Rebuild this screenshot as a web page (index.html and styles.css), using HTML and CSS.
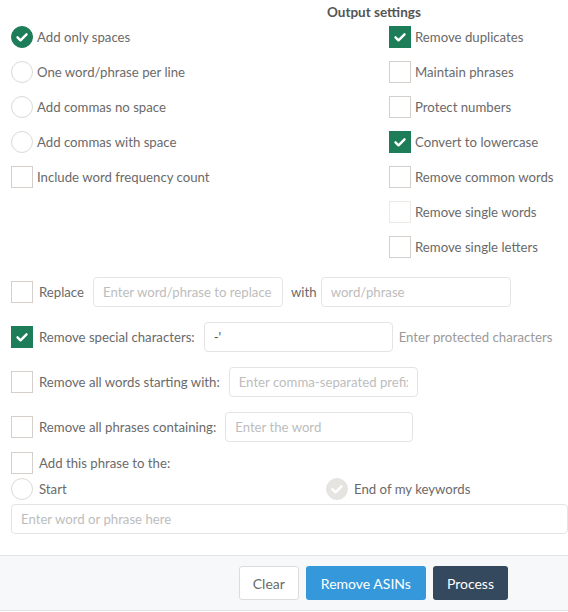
FILE: index.html
```html
<!DOCTYPE html>
<html>
<head>
<meta charset="utf-8">
<link rel="stylesheet" href="styles.css">
</head>
<body>
<div class="page">
  <div class="top">
    <div class="col-left">
      <div class="opt"><span class="radio on"><svg viewBox="0 0 22 22"><path d="M6.5 11.3l3 3 6-6" /></svg></span><span>Add only spaces</span></div>
      <div class="opt"><span class="radio"></span><span>One word/phrase per line</span></div>
      <div class="opt"><span class="radio"></span><span>Add commas no space</span></div>
      <div class="opt"><span class="radio"></span><span>Add commas with space</span></div>
      <div class="opt"><span class="box"></span><span>Include word frequency count</span></div>
    </div>
    <div class="col-right">
      <div class="heading">Output settings</div>
      <div class="list">
        <div class="opt"><span class="box on"><svg viewBox="0 0 22 22"><path d="M6.5 11.3l3 3 6-6" /></svg></span><span>Remove duplicates</span></div>
        <div class="opt"><span class="box"></span><span>Maintain phrases</span></div>
        <div class="opt"><span class="box"></span><span>Protect numbers</span></div>
        <div class="opt"><span class="box on"><svg viewBox="0 0 22 22"><path d="M6.5 11.3l3 3 6-6" /></svg></span><span>Convert to lowercase</span></div>
        <div class="opt"><span class="box"></span><span>Remove common words</span></div>
        <div class="opt"><span class="box faint"></span><span>Remove single words</span></div>
        <div class="opt"><span class="box"></span><span>Remove single letters</span></div>
      </div>
    </div>
  </div>

  <div class="rows">
    <div class="row">
      <span class="box"></span><span class="lbl">Replace</span>
      <input class="field w190" placeholder="Enter word/phrase to replace">
      <span class="lbl with">with</span>
      <input class="field w190 after-with" placeholder="word/phrase">
    </div>
    <div class="row">
      <span class="box on"><svg viewBox="0 0 22 22"><path d="M6.5 11.3l3 3 6-6" /></svg></span><span class="lbl">Remove special characters:</span>
      <input class="field w189" value="-'">
      <span class="hint">Enter protected characters</span>
    </div>
    <div class="row">
      <span class="box"></span><span class="lbl">Remove all words starting with:</span>
      <input class="field w189" placeholder="Enter comma-separated prefixes">
    </div>
    <div class="row">
      <span class="box"></span><span class="lbl">Remove all phrases containing:</span>
      <input class="field w188" placeholder="Enter the word">
    </div>
    <div class="row small first">
      <span class="box"></span><span class="lbl">Add this phrase to the:</span>
    </div>
    <div class="row small pos">
      <div class="pos-start"><span class="radio"></span><span class="lbl">Start</span></div>
      <div class="pos-end"><span class="radio dis"><svg viewBox="0 0 22 22"><path d="M6.5 11.3l3 3 6-6" /></svg></span><span class="lbl">End of my keywords</span></div>
    </div>
    <div class="row wide">
      <input class="field full" placeholder="Enter word or phrase here">
    </div>
  </div>

  <div class="footer">
    <button class="btn clear">Clear</button>
    <button class="btn blue">Remove ASINs</button>
    <button class="btn dark">Process</button>
  </div>
</div>
</body>
</html>
```

FILE: styles.css
```css
* { box-sizing: border-box; }
html, body { margin: 0; padding: 0; background: #fff; }
body {
  font-family: "Lato", "Noto Sans", sans-serif;
  font-size: 13.2px;
  color: #6a6a6a;
  width: 568px;
  overflow: hidden;
}
.page { width: 568px; }

.top { display: flex; }
.col-left { width: 327px; padding: 26px 0 0 11px; }
.col-right { flex: 1; }
.heading {
  font-weight: 700;
  font-size: 13.5px;
  color: #555;
  line-height: 24px;
  height: 26px;
}
.list { padding-left: 62px; }

.opt {
  display: flex;
  align-items: center;
  height: 22px;
  margin-bottom: 13px;
  gap: 4px;
  white-space: nowrap;
}

.radio, .box {
  flex: none;
  width: 22px;
  height: 22px;
  border: 1px solid #d4cfca;
  background: #fff;
  display: flex;
  align-items: center;
  justify-content: center;
}
.radio { border-radius: 50%; border-color: #ddd9d5; }
.radio.on, .box.on { background: #1d7d58; border-color: #1d7d58; }
.radio.dis { background: #e6e4e1; border-color: #e6e4e1; }
.box.faint { border-color: #ebe8e5; }
.radio svg, .box svg { width: 22px; height: 22px; flex: none; }
.radio path, .box path {
  fill: none;
  stroke: #fff;
  stroke-width: 2.4;
  stroke-linecap: round;
  stroke-linejoin: round;
}

.rows { padding: 6px 0 0 11px; }
.row {
  display: flex;
  align-items: center;
  height: 30px;
  margin-bottom: 15px;
  white-space: nowrap;
}
.row .box + .lbl, .row .radio + .lbl { margin-left: 6px; }
.row.small { height: 22px; margin-bottom: 4px; }
.row.first { margin-top: -5px; }
.row.wide { margin-bottom: 0; }
.lbl { color: #6a6a6a; }
.with { margin-left: 8px; }
.hint { color: #9a9a9a; margin-left: 6px; }

.field {
  height: 30px;
  border: 1px solid #e4e4e4;
  border-radius: 4px;
  padding: 0 9px;
  font-family: inherit;
  font-size: 13.2px;
  color: #555;
  background: #fff;
  margin-left: 9px;
  outline: none;
}
.field.after-with { margin-left: 4px; }
.field::placeholder { color: #bdbdbd; }
.w190 { width: 190px; }
.w189 { width: 189px; }
.w188 { width: 188px; }
.field.full { width: 570px; margin-left: 0; }

.pos-start { display: flex; align-items: center; width: 315px; }
.pos-end { display: flex; align-items: center; }
.pos-end .lbl { margin-left: 5px; }

.footer {
  margin-top: 21px;
  height: 56px;
  background: #f7f8fa;
  border-top: 1px solid #e2e3e5;
  border-bottom: 1px solid #e2e3e5;
  display: flex;
  justify-content: flex-end;
  align-items: flex-start;
  padding: 10px 60px 0 0;
  gap: 7px;
}
.btn {
  height: 34px;
  border-radius: 3px;
  font-family: inherit;
  font-size: 14px;
  padding: 0 13px;
  border: 1px solid transparent;
  cursor: pointer;
}
.clear { background: #fff; border-color: #dcdcdc; color: #6a6a6a; }
.blue { background: #3498db; color: #fff; padding: 0 14px; }
.dark { background: #34495e; color: #fff; }
```
